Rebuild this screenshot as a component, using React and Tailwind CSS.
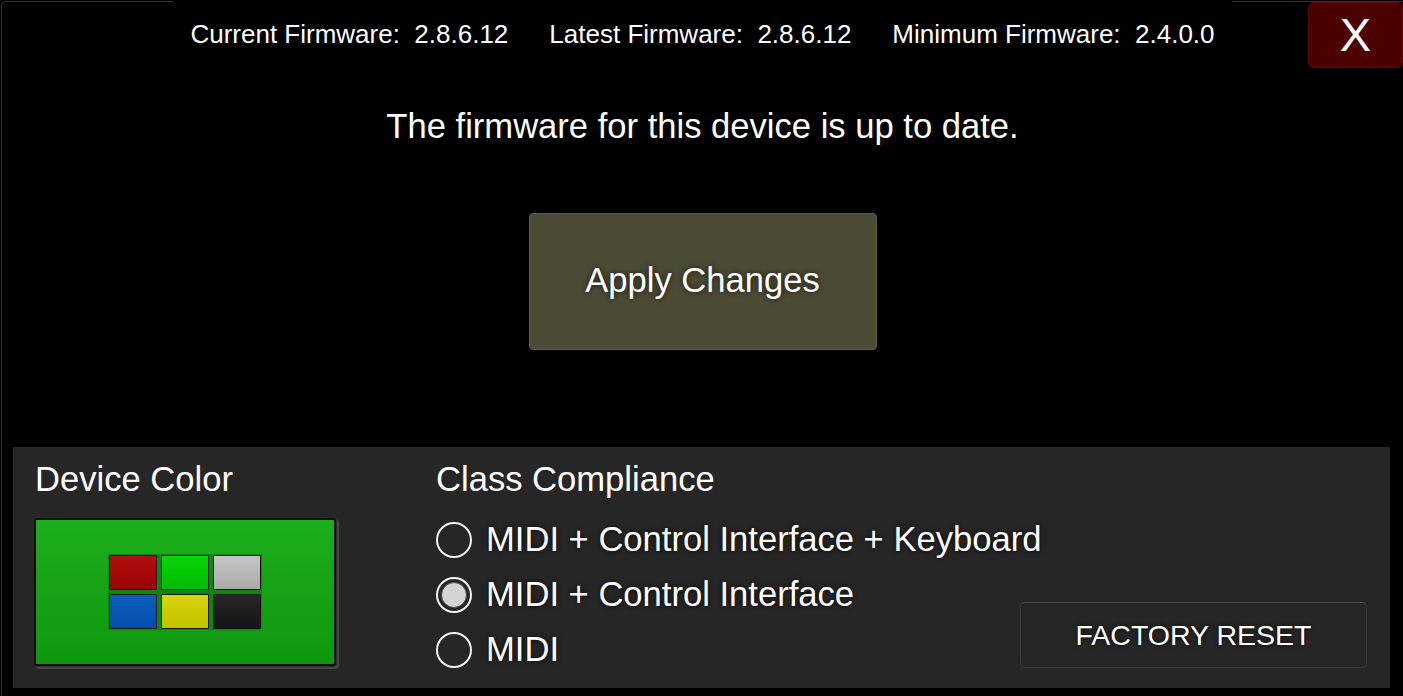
import { useState } from 'react';

const swatches = [
  { name: 'red', cls: 'bg-gradient-to-b from-[#b00d0d] to-[#970606]' },
  { name: 'green', cls: 'bg-gradient-to-b from-[#0ad40a] to-[#02bd02]' },
  { name: 'white', cls: 'bg-gradient-to-b from-[#c4c4c4] to-[#ababab]' },
  { name: 'blue', cls: 'bg-gradient-to-b from-[#0d5fbd] to-[#024fa8]' },
  { name: 'yellow', cls: 'bg-gradient-to-b from-[#d8d50a] to-[#c4c100]' },
  { name: 'black', cls: 'bg-gradient-to-b from-[#262626] to-[#151515]' },
];

const modes = ['MIDI + Control Interface + Keyboard', 'MIDI + Control Interface', 'MIDI'];

function Radio({ checked }) {
  return (
    <span className="w-9 h-9 rounded-full border-2 border-[#f2f2f2] flex items-center justify-center shrink-0">
      {checked && (
        <span className="w-[26px] h-[26px] rounded-full bg-[#d4d4d4] border border-[#4a4a4a]" />
      )}
    </span>
  );
}

export default function App() {
  const [mode, setMode] = useState(1);

  return (
    <div className="w-[1403px] h-[696px] bg-black relative overflow-hidden pt-px pl-px text-white font-['Liberation_Sans',Arial,sans-serif]">
      <div className="h-full border-l border-t border-[#333] rounded-tl-[5px] flex flex-col">
        {/* firmware info */}
        <div className="flex justify-center h-[64px]">
          <div className="-mt-px h-[65px] flex items-center gap-[41px] px-[17px] bg-black text-[26px] leading-[30px] whitespace-pre">
            <span>Current Firmware:  2.8.6.12</span>
            <span>Latest Firmware:  2.8.6.12</span>
            <span>Minimum Firmware:  2.4.0.0</span>
          </div>
        </div>

        <p className="mt-[41px] text-center text-[34.6px] leading-[39px]">
          The firmware for this device is up to date.
        </p>

        <button className="mt-[67px] mx-auto w-[348px] h-[137px] pb-[3px] rounded-[4px] bg-[#4c4b36] border border-[#5b5a46] text-[34.6px] leading-[39px] text-white [text-shadow:0_0_6px_rgba(0,0,0,0.7)]">
          Apply Changes
        </button>

        {/* settings panel */}
        <div className="mt-[97px] ml-[11px] w-[1377px] h-[241px] bg-[#262626] flex pl-[22px] pr-[23px] pt-[13px]">
          <div className="w-[401px] shrink-0">
            <h2 className="text-[34.6px] leading-[39px]">Device Color</h2>
            <button className="mt-[19px] -ml-px w-[302px] h-[148px] rounded-[3px] border-2 border-[#0a0f0a] bg-gradient-to-b from-[#1cae1c] to-[#0e970e] shadow-[0_0_0_1px_#2a2a2a,2px_2px_0_1px_#454545] flex items-center justify-center">
              <span className="grid grid-cols-3 gap-[4px] p-px bg-[#0f860f] rounded-[2px]">
                {swatches.map((s) => (
                  <span
                    key={s.name}
                    className={`w-[48px] h-[35px] border border-[#161616] rounded-[1px] ${s.cls}`}
                  />
                ))}
              </span>
            </button>
          </div>

          <div className="flex-1 min-w-0">
            <h2 className="text-[34.6px] leading-[39px]">Class Compliance</h2>
            <div className="mt-[13px]">
              {modes.map((m, i) => (
                <label
                  key={m}
                  onClick={() => setMode(i)}
                  className="h-[55px] flex items-center gap-[14px] cursor-pointer whitespace-nowrap"
                >
                  <Radio checked={mode === i} />
                  <span className="text-[34.6px] leading-[39px] [text-shadow:0_0_5px_rgba(0,0,0,0.8)]">{m}</span>
                </label>
              ))}
            </div>
          </div>

          <button className="shrink-0 self-end mb-[20px] w-[347px] h-[66px] rounded-[5px] bg-[#262626] border border-[#3a3a3a] border-t-[#4a4a4a] text-[28.5px] leading-[32px] text-white [text-shadow:0_0_5px_rgba(0,0,0,0.8)]">
            FACTORY RESET
          </button>
        </div>
      </div>

      <button className="absolute top-[2px] right-0 w-[95px] h-[66px] rounded-[6px] bg-[#4d0000] border border-[#5c0a0a] text-[47px] leading-[52px] text-white">
        X
      </button>
    </div>
  );
}
